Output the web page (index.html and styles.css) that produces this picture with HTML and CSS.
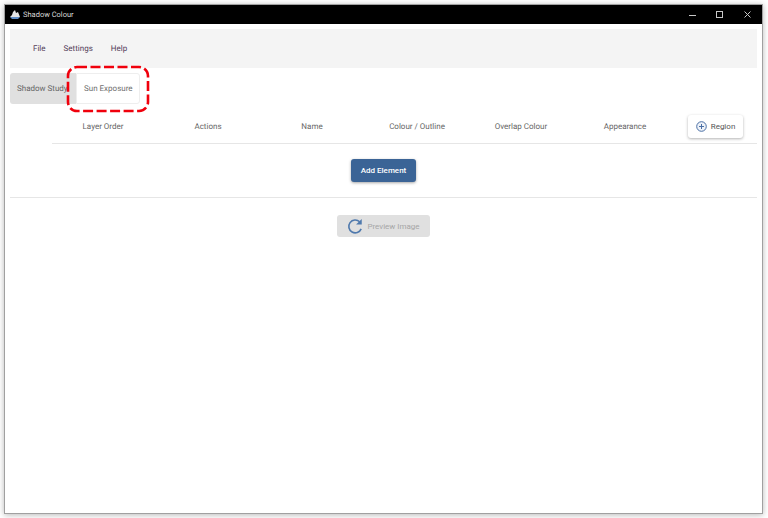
FILE: index.html
```html
<!DOCTYPE html>
<html lang="en">
<head>
  <meta charset="UTF-8" />
  <title>Shadow Colour</title>
  <link rel="stylesheet" href="styles.css">
</head>
<body>
  <div class="window">
    <div class="titlebar">
      <svg class="app-icon" width="10" height="9" viewBox="0 0 10 9">
        <path d="M0 7 L2 5 L3 2 L5 0 L6 3 L8 2 L10 7 Z" fill="#e4e4e4" />
        <path d="M0 7 H10 L8 9 H2 Z" fill="#5f8cc4" />
      </svg>
      <span class="app-title">Shadow Colour</span>
      <div class="win-controls">
        <svg width="10" height="10" viewBox="0 0 10 10"><path d="M2 5.5 H9" stroke="#c8c8c8" fill="none" /></svg>
        <svg width="10" height="10" viewBox="0 0 10 10"><rect x="1.5" y="1.5" width="6" height="6" stroke="#c8c8c8" fill="none" /></svg>
        <svg width="10" height="10" viewBox="0 0 10 10"><path d="M1.5 1.5 L7.5 7.5 M7.5 1.5 L1.5 7.5" stroke="#c8c8c8" fill="none" /></svg>
      </div>
    </div>

    <div class="content">
      <div class="menubar">
        <span class="menu-item">File</span>
        <span class="menu-item">Settings</span>
        <span class="menu-item">Help</span>
      </div>

      <div class="tabs">
        <div class="tab">Shadow Study</div>
        <div class="tab tab-active">Sun Exposure</div>
        <svg class="callout" width="84" height="48" viewBox="0 0 84 48">
          <rect x="2" y="2" width="80" height="44" rx="9" fill="none" stroke="#f0000c" stroke-width="2.6" stroke-dasharray="10 3.5" />
        </svg>
      </div>

      <div class="table-head">
        <div class="col col-order">Layer Order</div>
        <div class="col col-actions">Actions</div>
        <div class="col col-name">Name</div>
        <div class="col col-colour">Colour / Outline</div>
        <div class="col col-overlap">Overlap Colour</div>
        <div class="col col-appearance">Appearance</div>
        <button class="region-btn">
          <svg width="11" height="11" viewBox="0 0 11 11">
            <circle cx="5.5" cy="5.5" r="4.8" stroke="#4a6fa5" fill="#eef2f8" />
            <path d="M5.5 3 V8 M3 5.5 H8" stroke="#4a6fa5" fill="none" />
          </svg>
          Region
        </button>
      </div>

      <div class="add-row">
        <button class="add-btn">Add Element</button>
      </div>

      <div class="preview-row">
        <button class="preview-btn">
          <svg width="17" height="17" viewBox="0 0 18 18">
            <path d="M15 11.5 A6.8 6.8 0 1 1 13.4 4" stroke="#4f79ad" stroke-width="1.7" fill="none" />
            <path d="M15.6 1 V7 H9.6 Z" fill="#4f79ad" />
          </svg>
          Preview Image
        </button>
      </div>
    </div>
  </div>
</body>
</html>
```

FILE: styles.css
```css
html, body {
  height: 100%;
}
body {
  font-family: Roboto, 'Liberation Sans', sans-serif;
  text-rendering: geometricPrecision;
  margin: 0;
  padding: 5px 6px 5px 5px;
  box-sizing: border-box;
  background: #fff;
  overflow: hidden;
}
.window {
  height: 100%;
  display: flex;
  flex-direction: column;
  background: #fff;
  box-shadow: 0 0 0 1px #a0a0a0, 0 1px 6px 1px rgba(0,0,0,0.28);
}
.titlebar {
  height: 19px;
  flex-shrink: 0;
  background: #000;
  color: #d8d8d8;
  display: flex;
  align-items: center;
  padding-left: 5px;
  font-size: 7.5px;
}
.app-icon {
  margin-right: 3px;
}
.win-controls {
  margin-left: auto;
  display: flex;
  gap: 18px;
  padding-right: 9px;
}
.content {
  flex-grow: 1;
  padding: 5px 5px 0 5px;
}
.menubar {
  height: 39px;
  background: #f4f4f4;
  display: flex;
  align-items: center;
  padding-left: 23px;
  gap: 18px;
}
.menu-item {
  font-size: 8px;
  color: #54405a;
}
.tabs {
  position: relative;
  display: flex;
  margin-top: 5px;
  height: 31px;
  width: 130px;
}
.tab {
  width: 66px;
  box-sizing: border-box;
  background: #e0e0e0;
  color: #666;
  font-size: 8px;
  line-height: 31px;
  padding-left: 7px;
  white-space: nowrap;
  border-radius: 3px 0 0 3px;
}
.tab-active {
  width: 64px;
  background: #fff;
  padding-left: 7px;
  border: 1px solid #eee;
  line-height: 29px;
  border-radius: 0 3px 3px 0;
  color: #707070;
}
.callout {
  position: absolute;
  left: 56px;
  top: -8px;
}
.table-head {
  margin-left: 42px;
  height: 33px;
  padding-top: 6px;
  border-bottom: 1px solid #e6e6e6;
  display: flex;
  align-items: center;
  font-size: 8px;
  color: #666;
}
.col {
  text-align: center;
  white-space: nowrap;
}
.col-order { width: 102px; }
.col-actions { width: 108px; }
.col-name { width: 100px; }
.col-colour { width: 110px; }
.col-overlap { width: 98px; }
.col-appearance { width: 110px; }
.region-btn {
  margin-left: 8px;
  width: 55px;
  height: 23px;
  padding: 0;
  border: none;
  border-radius: 3px;
  background: #fff;
  box-shadow: 0 1px 3px rgba(0,0,0,0.3);
  display: flex;
  align-items: center;
  justify-content: center;
  gap: 4px;
  font-family: inherit;
  font-size: 8px;
  color: #555;
}
.add-row {
  height: 54px;
  border-bottom: 1px solid #e6e6e6;
  display: flex;
  justify-content: center;
  padding-top: 15px;
  box-sizing: border-box;
}
.add-btn {
  width: 65px;
  height: 23px;
  padding: 0;
  border: none;
  border-radius: 3px;
  background: #3b6496;
  box-shadow: 0 1px 3px rgba(0,0,0,0.35);
  color: #fff;
  font-family: inherit;
  font-size: 8px;
  font-weight: 500;
}
.preview-row {
  display: flex;
  justify-content: center;
  padding-top: 17px;
}
.preview-btn {
  width: 93px;
  height: 22px;
  padding: 0;
  border: none;
  border-radius: 3px;
  background: #e0e0e0;
  display: flex;
  align-items: center;
  justify-content: center;
  gap: 3px;
  color: #a6a6a6;
  font-family: inherit;
  font-size: 8px;
}
```
